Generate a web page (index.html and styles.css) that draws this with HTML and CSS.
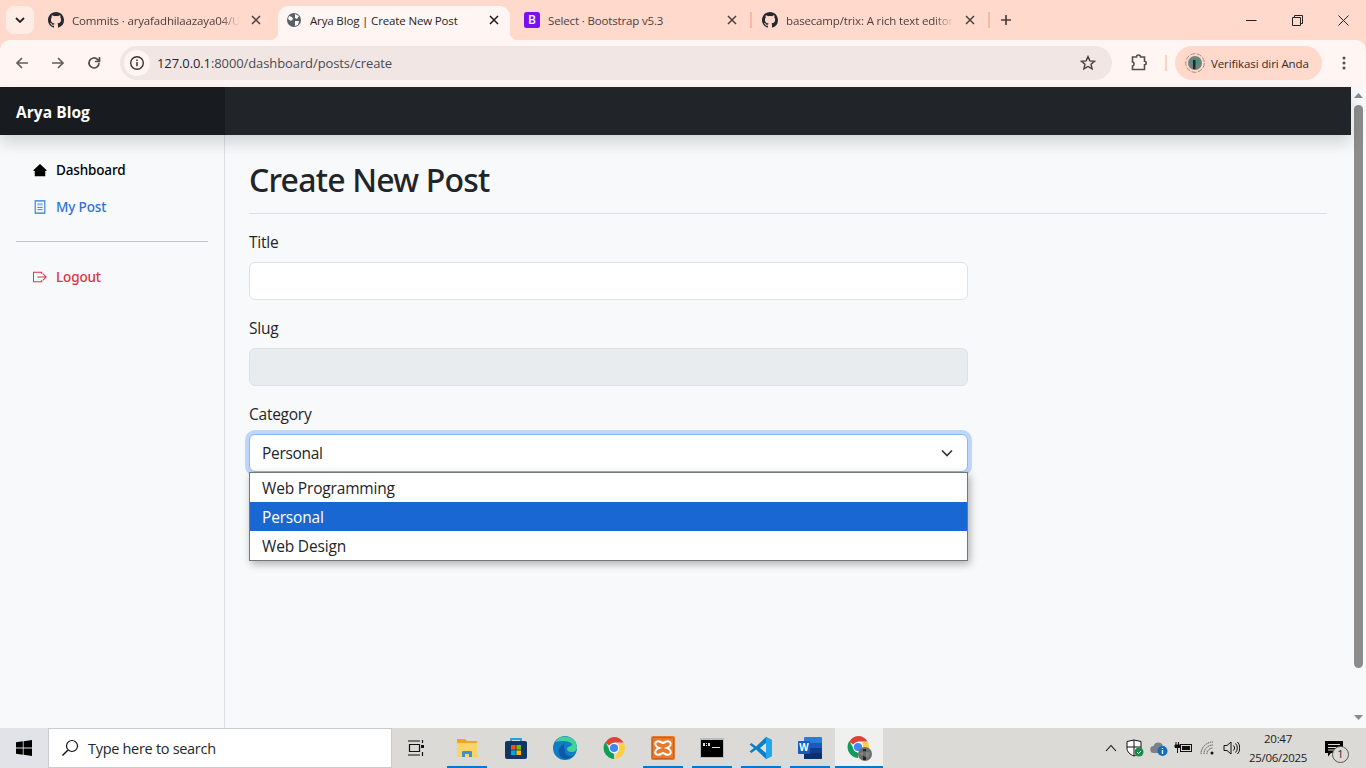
FILE: index.html
```html
<!DOCTYPE html>
<html lang="en">
<head>
<meta charset="utf-8">
<title>Arya Blog | Create New Post</title>
<link rel="stylesheet" href="styles.css">
</head>
<body>
<svg class="defs" width="0" height="0" aria-hidden="true">
  <symbol id="gh" viewBox="0 0 16 16"><path d="M8 0C3.58 0 0 3.58 0 8c0 3.54 2.29 6.53 5.47 7.59.4.07.55-.17.55-.38 0-.19-.01-.82-.01-1.49-2.01.37-2.53-.49-2.69-.94-.09-.23-.48-.94-.82-1.13-.28-.15-.68-.52-.01-.53.63-.01 1.08.58 1.23.82.72 1.21 1.87.87 2.33.69.07-.52.28-.87.51-1.07-1.78-.2-3.64-.89-3.64-3.95 0-.87.31-1.59.82-2.15-.08-.2-.36-1.02.08-2.12 0 0 .67-.21 2.2.82.64-.18 1.32-.27 2-.27.68 0 1.36.09 2 .27 1.53-1.04 2.2-.82 2.2-.82.44 1.1.16 1.92.08 2.12.51.56.82 1.27.82 2.15 0 3.07-1.87 3.75-3.65 3.95.29.25.54.73.54 1.48 0 1.07-.01 1.93-.01 2.2 0 .21.15.46.55.38A8.013 8.013 0 0016 8c0-4.42-3.58-8-8-8z"/></symbol>
  <symbol id="x" viewBox="0 0 10 10"><path d="M1 1l8 8M9 1l-8 8" fill="none" stroke="currentColor" stroke-width="1.5"/></symbol>
  <symbol id="chrome" viewBox="0 0 24 24">
    <path d="M12 12L3.3 6.9A11 11 0 0 1 12 1a11 11 0 0 1 9.6 5.6H12z" fill="#db4437"/>
    <path d="M12 23A11 11 0 0 1 3.3 6.1L8.5 15l3.5 3z" fill="#0f9d58"/>
    <path d="M12 23l5.2-9-1-7h5.6A11 11 0 0 1 12 23z" fill="#ffcd40"/>
    <circle cx="12" cy="12" r="5.2" fill="#fff"/><circle cx="12" cy="12" r="4.1" fill="#4285f4"/>
  </symbol>
</svg>

<header class="chrome">
  <div class="tabstrip">
    <div class="tab-search"><svg width="10" height="6" viewBox="0 0 10 6"><path d="M1 1l4 4 4-4" fill="none" stroke="#2b2320" stroke-width="1.8"/></svg></div>
    <div class="tabs">
      <div class="tab">
        <svg class="fav fav-gh"><use href="#gh"/></svg>
        <span class="tab-title">Commits · aryafadhilaazaya04/U</span>
        <svg class="tab-x"><use href="#x"/></svg>
      </div>
      <div class="tab tab-active">
        <svg class="fav" viewBox="0 0 16 16"><circle cx="8" cy="8" r="7" fill="#5b6067"/><path d="M3 4l3 1 1 2-2 2-3-2zM9 2l4 2-2 3-2-1zM9 9l4 0-1 4-3 1z" fill="#fff"/></svg>
        <span class="tab-title tab-title-full">Arya Blog | Create New Post</span>
        <svg class="tab-x"><use href="#x"/></svg>
      </div>
      <div class="tab">
        <svg class="fav" viewBox="0 0 16 16"><rect width="16" height="16" rx="2.5" fill="#7a10f2"/><text x="8" y="12.4" text-anchor="middle" class="fav-b">B</text></svg>
        <span class="tab-title tab-title-full">Select · Bootstrap v5.3</span>
        <svg class="tab-x"><use href="#x"/></svg>
        <i class="tab-sep"></i>
      </div>
      <div class="tab">
        <svg class="fav fav-gh"><use href="#gh"/></svg>
        <span class="tab-title">basecamp/trix: A rich text editor</span>
        <svg class="tab-x"><use href="#x"/></svg>
        <i class="tab-sep"></i>
      </div>
    </div>
    <svg class="tab-new" width="12" height="12" viewBox="0 0 12 12"><path d="M6 1v10M1 6h10" stroke="#4a3f3b" stroke-width="1.7"/></svg>
    <div class="winctl">
      <svg width="11" height="11" viewBox="0 0 11 11"><path d="M0 5.500h10.500" stroke="#222" stroke-width="1"/></svg>
      <svg width="11" height="11" viewBox="0 0 11 11"><path d="M.5 2.500h8v8h-8zM2.500 2.500v-2h8v8h-2" fill="none" stroke="#222" stroke-width="1"/></svg>
      <svg width="11" height="11" viewBox="0 0 11 11"><path d="M.5.500l10 10M10.500.500l-10 10" stroke="#222" stroke-width="1"/></svg>
    </div>
  </div>
  <div class="toolbar">
    <svg class="tool" viewBox="0 0 16 16"><path d="M14 8H3M8 3L3 8l5 5" fill="none" stroke="#6b5a55" stroke-width="1.7"/></svg>
    <svg class="tool" viewBox="0 0 16 16"><path d="M2 8h11M8 3l5 5-5 5" fill="none" stroke="#6b5a55" stroke-width="1.7"/></svg>
    <svg class="tool" viewBox="0 0 16 16"><path d="M13 8a5 5 0 1 1-1.500-3.600L13.500 6.500M13.500 2v4.500H9" fill="none" stroke="#5c4c47" stroke-width="1.7"/></svg>
    <div class="omnibox">
      <span class="info"><svg width="16" height="16" viewBox="0 0 16 16"><circle cx="8" cy="8" r="6.300" fill="none" stroke="#3b3230" stroke-width="1.400"/><path d="M8 7v4.200M8 4.400v1.500" stroke="#3b3230" stroke-width="1.500"/></svg></span>
      <span class="url">127.0.0.1<span class="url-path">:8000/dashboard/posts/create</span></span>
      <svg class="star" width="16" height="16" viewBox="0 0 16 16"><path d="M8 1.600l1.900 4.300 4.600.4-3.500 3 1.100 4.600L8 11.500l-4.100 2.400L5 9.300l-3.500-3 4.600-.4z" fill="none" stroke="#4a3d39" stroke-width="1.400"/></svg>
    </div>
    <svg class="ext" width="18" height="18" viewBox="0 0 18 18"><path d="M2.500 3h4a2 2 0 0 1 4 0h4v4.300a1.700 1.700 0 0 1 0 3.400v4.800h-12v-3.500a1.800 1.800 0 0 0 1.500-1.800A1.800 1.800 0 0 0 2.500 8z" fill="none" stroke="#5c4c47" stroke-width="1.600"/></svg>
    <i class="tool-sep"></i>
    <div class="profile">
      <svg width="20" height="20" viewBox="0 0 20 20"><circle cx="10" cy="10" r="9.300" fill="none" stroke="#b8877a" stroke-dasharray="5 1.500"/><circle cx="10" cy="10" r="7" fill="#6f8480"/><path d="M3.500 9L12 5.500l4 2.500-2 4z" fill="#4d8f7d"/><path d="M8 7h2.500v9H8z" fill="#22282b"/></svg>
      <span>Verifikasi diri Anda</span>
    </div>
    <svg class="dots" width="4" height="14" viewBox="0 0 4 14"><circle cx="2" cy="2" r="1.500"/><circle cx="2" cy="7" r="1.500"/><circle cx="2" cy="12" r="1.500"/></svg>
  </div>
</header>

<div class="stage">
  <div class="viewport">
    <nav class="navbar"><a class="brand">Arya Blog</a></nav>
    <div class="below">
      <aside class="sidebar">
        <ul class="side-list">
          <li class="side-item side-dark">
            <svg class="side-ico" viewBox="0 0 16 16"><path d="M8 1L16 8.500 14 9v6H2V9L0 8.500z" fill="#000"/></svg>Dashboard
          </li>
          <li class="side-item side-blue">
            <svg class="side-ico" viewBox="0 0 16 16"><path d="M2.500 1h11v14h-11z" fill="none" stroke="currentColor" stroke-width="1.200"/><path d="M5 3.700h6v2.500H5z" fill="#9db9ec"/><path d="M5 8.500h6M5 11h6" stroke="currentColor"/></svg>My Post
          </li>
        </ul>
        <hr class="side-hr">
        <ul class="side-list">
          <li class="side-item side-red">
            <svg class="side-ico" viewBox="0 0 16 16"><path d="M10 4.500V2.500H.500v11H10v-2M5 8h10M11.500 4.500L15 8l-3.500 3.500" fill="none" stroke="currentColor" stroke-width="1.200"/></svg>Logout
          </li>
        </ul>
      </aside>
      <main class="content">
        <h1 class="title">Create New Post</h1>
        <form class="form">
          <div class="field">
            <label class="label">Title</label>
            <div class="input"></div>
          </div>
          <div class="field">
            <label class="label">Slug</label>
            <div class="input input-disabled"></div>
          </div>
          <div class="field select-field">
            <label class="label">Category</label>
            <div class="input select">Personal
              <svg class="caret" width="12" height="8" viewBox="0 0 12 8"><path d="M1 1.500l5 5 5-5" fill="none" stroke="#343a40" stroke-width="1.700"/></svg>
            </div>
            <ul class="dropdown">
              <li class="opt">Web Programming</li>
              <li class="opt opt-on">Personal</li>
              <li class="opt">Web Design</li>
            </ul>
          </div>
        </form>
      </main>
    </div>
  </div>
  <div class="scrollbar">
    <svg class="sb-arrow" width="9" height="5" viewBox="0 0 9 5"><path d="M4.500 0L9 5H0z"/></svg>
    <div class="sb-thumb"></div>
    <svg class="sb-arrow" width="9" height="5" viewBox="0 0 9 5"><path d="M0 0h9L4.500 5z"/></svg>
  </div>
</div>

<footer class="taskbar">
  <div class="start"><svg width="16" height="16" viewBox="0 0 16 16"><path d="M0 2.300l6.800-1v6.300H0zM7.600 1.200L16 0v7.600H7.600zM0 8.400h6.800v6.300l-6.800-1zM7.600 8.400H16V16l-8.400-1.200z" fill="#000"/></svg></div>
  <div class="search">
    <svg width="18" height="18" viewBox="0 0 18 18"><circle cx="11" cy="7" r="5.500" fill="none" stroke="#111" stroke-width="1.200"/><path d="M7 11l-5.500 5.500" stroke="#111" stroke-width="1.400"/></svg>
    <span>Type here to search</span>
  </div>
  <div class="taskview"><svg width="18" height="18" viewBox="0 0 18 18"><path d="M1 2h12M1 16h12M2.500 5.500h10v7h-10zM15.500 1v3M15.500 13v4" fill="none" stroke="#111" stroke-width="1.200"/><rect x="14" y="6" width="3" height="3" fill="#111"/></svg></div>
  <div class="apps">
    <div class="app app-on"><svg width="24" height="24" viewBox="0 0 24 24"><path d="M2 3h8l2 2h10v4H2z" fill="#e9a824"/><path d="M2 7h20v14H2z" fill="#fbd467"/><path d="M7 21v-5a1 1 0 0 1 1-1h8a1 1 0 0 1 1 1v5h-3v-3h-4v3z" fill="#3f8fd2"/></svg></div>
    <div class="app"><svg width="24" height="24" viewBox="0 0 24 24"><path d="M7 6V3h10v3" fill="none" stroke="#20a4d8" stroke-width="1.800"/><rect x="1" y="5" width="22" height="18" rx="2" fill="#12365f"/><rect x="7" y="9" width="4.600" height="4.600" fill="#f25022"/><rect x="12.400" y="9" width="4.600" height="4.600" fill="#7fba00"/><rect x="7" y="14.400" width="4.600" height="4.600" fill="#00a4ef"/><rect x="12.400" y="14.400" width="4.600" height="4.600" fill="#ffb900"/></svg></div>
    <div class="app"><svg width="24" height="24" viewBox="0 0 24 24"><circle cx="12" cy="12" r="12" fill="#0f7dc2"/><path d="M2 6A12 12 0 0 1 24 11c0 3-2 5-5 5s-5-1-5-3c0-3 5-2 5-5-2-3-10-4-17-2z" fill="#41d199"/><path d="M12 14c-1 4 3 7 7 6 1 0 2-1 3-2-3 5-11 7-15 2-3-4-1-11 5-12-2 2-1 3 0 6z" fill="#0c5aa6"/></svg></div>
    <div class="app"><svg width="24" height="24"><use href="#chrome"/></svg></div>
    <div class="app app-on"><svg width="24" height="24" viewBox="0 0 24 24"><rect width="24" height="24" rx="2" fill="#e87a2d"/><rect x="1.500" y="1.500" width="21" height="21" rx="1" fill="none" stroke="#c9601b"/><path d="M5 6c3-2 4 0 7 1 3-1 4-3 7-1 2 2 0 5-3 6 3 1 5 4 3 6-3 2-4 0-7-1-3 1-4 3-7 1-2-2 0-5 3-6-3-1-5-4-3-6z" fill="none" stroke="#fff" stroke-width="2"/></svg></div>
    <div class="app app-on"><svg width="24" height="20" viewBox="0 0 24 20"><rect width="24" height="20" fill="#b9bcbc"/><rect x="1" y="2" width="22" height="17" fill="#000"/><path d="M3 5h2v3H3zM6 5h1v1H6zM6 7h1v1H6zM8 5h2v3H8zM12 9h8v1h-8z" fill="#ddd"/></svg></div>
    <div class="app app-on"><svg width="24" height="24" viewBox="0 0 24 24"><path d="M17 1l6 3v16l-6 3-10-9.500L2.500 17 .5 15.500 5 12 .5 8.500 2.500 7 7 10.500z" fill="#0a7fc7"/><path d="M17 1l6 3v16l-6 3z" fill="#23a6f0"/><path d="M17 7l-6 5 6 5z" fill="#e3e0dc"/></svg></div>
    <div class="app app-on"><svg width="24" height="24" viewBox="0 0 24 24"><rect x="6" y="1" width="18" height="22" rx="1" fill="#2b7cd3"/><path d="M6 7h18v5H6z" fill="#185abd"/><path d="M6 12h18v5H6z" fill="#103f91"/><path d="M6 17h18v5a1 1 0 0 1-1 1H6z" fill="#0c2f70"/><rect y="5" width="12" height="13" rx="1" fill="#185abd"/><text x="6" y="15" text-anchor="middle" class="word-w">W</text></svg></div>
    <div class="app app-on app-active"><svg width="26" height="26" viewBox="0 0 26 26"><use href="#chrome" width="24" height="24"/><circle cx="19" cy="19" r="7" fill="#6b6f6f"/><path d="M17 14h3v11h-3z" fill="#20262a"/><path d="M13 19l5-3 6 2-2 5z" fill="#8a908e" opacity=".7"/></svg></div>
  </div>
  <div class="tray">
    <svg class="tray-chev" width="12" height="8" viewBox="0 0 12 8"><path d="M1 7l5-5.500L11 7" fill="none" stroke="#111" stroke-width="1.100"/></svg>
    <svg class="tray-shield" width="18" height="18" viewBox="0 0 18 18"><path d="M1 2.500L8 1l7 1.500V9c0 4-3 6.500-7 8-4-1.500-7-4-7-8z" fill="#fff" stroke="#111"/><path d="M8 1v16M1 8h14" stroke="#111"/><circle cx="13" cy="13" r="4.500" fill="#1c8a4a"/><path d="M11 13l1.500 1.500L15 12" fill="none" stroke="#fff"/></svg>
    <svg class="tray-cloud" width="18" height="16" viewBox="0 0 18 16"><path d="M4 13a3.500 3.500 0 0 1-.5-7 5 5 0 0 1 9.500 0c1 0 2 .5 3 1.500V13z" fill="#7b8187"/><circle cx="12.500" cy="11" r="5" fill="#0d6cc4"/><path d="M12.500 8v1M12.500 10v4" stroke="#fff" stroke-width="1.300"/></svg>
    <svg class="tray-batt" width="18" height="12" viewBox="0 0 18 12"><rect x="6.500" y="2.500" width="11" height="7" fill="none" stroke="#111"/><rect x="8" y="4" width="8" height="4" fill="#111"/><path d="M2 0v3M4.500 0v3M1 3h5v2.500H1zM3.500 5.500V11" stroke="#111" fill="#111"/></svg>
    <svg class="tray-wifi" width="16" height="14" viewBox="0 0 16 14"><path d="M1 13A12 12 0 0 1 13 1M4 13a9 9 0 0 1 9-9M7 13a6 6 0 0 1 6-6" fill="none" stroke="#4f4f4f" stroke-dasharray="1.500 .7"/><circle cx="12" cy="12" r="1.500" fill="#111"/></svg>
    <svg class="tray-vol" width="17" height="14" viewBox="0 0 17 14"><path d="M1 4.500h3L8 1v12L4 9.500H1z" fill="none" stroke="#111"/><path d="M10.500 4.500a3.500 3.500 0 0 1 0 5M12.500 2.500a6.500 6.500 0 0 1 0 9M14.500 1a9 9 0 0 1 0 12" fill="none" stroke="#111"/></svg>
    <div class="clock"><span>20:47</span><span>25/06/2025</span></div>
    <div class="notif">
      <svg width="18" height="16" viewBox="0 0 18 16"><path d="M0 0h18v12H6l-3 3.500V12H0z" fill="#000"/><path d="M3 3.500h12M3 6.500h12M3 9h8" stroke="#dbd9d6"/></svg>
      <span class="badge">1</span>
    </div>
  </div>
</footer>
</body>
</html>
```
FILE: styles.css
```css
* { box-sizing: border-box; }
html, body { margin: 0; height: 100%; overflow: hidden; }
body {
  width: 1366px;
  height: 768px;
  display: flex;
  flex-direction: column;
  font-family: "Open Sans", "Noto Sans", "Liberation Sans", sans-serif;
  color: #212529;
  background: #f8f9fa;
}
ul { list-style: none; margin: 0; padding: 0; }
.defs { position: absolute; }

/* browser chrome */
.chrome { height: 87px; flex: none; background: #ffd9cc; }
.tabstrip { height: 40px; display: flex; align-items: flex-start; padding: 6px 0 0 6px; position: relative; }
.tab-search { width: 28px; height: 28px; border-radius: 8px; background: #ffece5; display: flex; align-items: center; justify-content: center; flex: none; }
.tabs { display: flex; gap: 6px; margin-left: 6px; }
.tab {
  width: 232px; height: 34px; flex: none; position: relative;
  display: flex; align-items: center; padding: 0 8px 6px; gap: 8px;
  font-size: 11.500px; letter-spacing: -.15px; color: #4c403c; border-radius: 10px 10px 0 0;
}
.tab-active { background: #fff5f2; color: #2b2422; }
.tab-active::before, .tab-active::after {
  content: ""; position: absolute; bottom: 0; width: 8px; height: 8px;
}
.tab-active::before { left: -8px; background: radial-gradient(circle at 0 0, transparent 8px, #fff5f2 8.500px); }
.tab-active::after { right: -8px; background: radial-gradient(circle at 100% 0, transparent 8px, #fff5f2 8.500px); }
.fav { width: 16px; height: 16px; flex: none; }
.fav-gh { fill: #24292f; }
.fav-b { font: 600 12px "Open Sans", sans-serif; fill: #fff; }
.tab-title {
  flex: 1; min-width: 0; overflow: hidden; white-space: nowrap;
  -webkit-mask-image: linear-gradient(to right, #000 88%, transparent 100%);
  mask-image: linear-gradient(to right, #000 88%, transparent 100%);
}
.tab-title-full { -webkit-mask-image: none; mask-image: none; }
.tab-x { width: 10px; height: 10px; flex: none; margin: 0 3px; color: #4c403c; }
.tab-active .tab-x { color: #1f1a18; }
.tab-sep { position: absolute; right: -4px; top: 6px; width: 2px; height: 16px; background: #fbb8a3; }
.tab-new { flex: none; margin: 8px 0 0 14px; }
.winctl { margin-left: auto; display: flex; align-items: center; gap: 35px; padding: 9px 17px 0 0; }
.toolbar {
  height: 47px; background: #fff5f2; border-radius: 10px 10px 0 0;
  display: flex; align-items: center; padding: 0 14px 1px 14px;
}
.tool { width: 16px; height: 16px; margin-right: 20px; flex: none; }
.tool:nth-child(3) { margin-right: 18px; }
.omnibox {
  width: 992px; height: 34px; border-radius: 17px; background: #f2e6e4; flex: none;
  display: flex; align-items: center; padding: 0 16px 0 4px;
}
.info { width: 26px; height: 26px; border-radius: 50%; background: #fff5f2; display: flex; align-items: center; justify-content: center; flex: none; }
.url { font-size: 13px; letter-spacing: -.1px; margin-left: 7px; color: #23262b; }
.url-path { color: #4b4a50; }
.star { margin-left: auto; }
.ext { margin-left: 18px; flex: none; }
.tool-sep { width: 2px; height: 16px; background: #fbd3c6; margin-left: 17px; flex: none; }
.profile {
  width: 147px; height: 34px; border-radius: 17px; background: #ffd9cc; margin-left: 8px; flex: none;
  display: flex; align-items: center; padding-left: 10px; gap: 6px; font-size: 11.500px; letter-spacing: -.1px; color: #38292a; white-space: nowrap;
}
.dots { margin-left: 20px; fill: #5c4c47; flex: none; }

/* page */
.stage { flex: 1; min-height: 0; display: flex; }
.viewport { flex: 1; min-width: 0; display: flex; flex-direction: column; }
.navbar {
  height: 48px; flex: none; background: #212529; position: relative; z-index: 2;
  box-shadow: 0 8px 16px rgba(0,0,0,.15); display: flex;
}
.brand {
  width: 225px; background: #181b1f; color: #fff; font-size: 15.500px; font-weight: 700;
  padding: 1px 0 0 16px; display: flex; align-items: center; letter-spacing: .05px;
}
.below { flex: 1; min-height: 0; display: flex; }
.sidebar { width: 225px; flex: none; border-right: 1px solid #dcdfe4; padding: 16px 16px 0; background: #f8f9fa; }
.side-item { height: 37px; display: flex; align-items: center; font-family: "Noto Sans", "Open Sans", sans-serif; font-size: 13.500px; font-weight: 500; padding-left: 17px; gap: 9px; letter-spacing: -.15px; }
.side-ico { width: 14px; height: 16px; flex: none; }
.side-dark { color: #000; }
.side-blue { color: #2c72dc; }
.side-red { color: #dc3545; }
.side-hr { margin: 16px 0 16px; border: 0; border-top: 1px solid #c4c6ca; }
.content { flex: 1; min-width: 0; padding: 0 24px; }
.title {
  margin: 0 0 15px; height: 79px; padding-top: 21px; border-bottom: 1px solid #dee2e6;
  font-family: "Noto Sans", "Open Sans", sans-serif;
  font-size: 32px; font-weight: 500; line-height: 48px; letter-spacing: -.8px; color: #212529;
}
.form { width: 719px; }
.field { margin-bottom: 15px; position: relative; }
.label { display: block; height: 33px; padding-top: 1px; font-size: 15.500px; line-height: 24px; letter-spacing: -.25px; }
.input {
  height: 38px; background: #fff; border: 1px solid #dee2e6; border-radius: 6px;
  font-size: 15.500px; letter-spacing: -.3px; line-height: 36px; padding: 0 12px;
}
.input-disabled { background: #e9ecef; }
.select { position: relative; border-color: #86b7fe; box-shadow: 0 0 0 4px rgba(13,110,253,.25); }
.caret { position: absolute; right: 14px; top: 14px; }
.dropdown {
  position: absolute; left: 0; top: 71px; width: 719px; height: 89px;
  background: #fff; border: 1px solid #767676; box-shadow: 2px 3px 8px rgba(0,0,0,.3);
  font-size: 15.500px; letter-spacing: -.17px; z-index: 3;
}
.opt { height: 29px; line-height: 28px; padding: 1px 0 0 12px; }
.opt-on { background: #1967d2; color: #fff; }

/* scrollbar */
.scrollbar { width: 15px; flex: none; background: #f8f9fa; display: flex; flex-direction: column; align-items: center; padding: 6px 0 8px; }
.sb-arrow { fill: #8a8a8a; flex: none; }
.sb-thumb { width: 9px; height: 563px; margin: 7px 0 0; background: #8c8c8c; border-radius: 5px; }
.sb-thumb + .sb-arrow { margin-top: auto; }

/* taskbar */
.taskbar { height: 40px; flex: none; display: flex; background: #dcdad7; font-family: "Open Sans", sans-serif; }
.start { width: 48px; background: #e2e2e9; display: flex; align-items: center; justify-content: center; flex: none; }
.search {
  width: 344px; height: 40px; background: #fff; border: 1px solid #c9cbd0; flex: none;
  display: flex; align-items: center; padding-left: 12px; gap: 9px; font-size: 14.500px; letter-spacing: -.3px; color: #24282c;
}
.taskview { width: 50px; display: flex; align-items: center; justify-content: center; padding-right: 3px; flex: none; }
.apps { display: flex; flex: none; }
.app { width: 49px; height: 40px; display: flex; align-items: center; justify-content: center; position: relative; }
.app-on::after { content: ""; position: absolute; left: 5px; right: 4px; bottom: 0; height: 2px; background: #0078d4; }
.app-active { background: #f0f0ef; width: 48px; margin-left: 1px; }
.app-active::after { left: 0; right: 0; }
.word-w { font: 700 10px "Liberation Sans", sans-serif; fill: #fff; }
.tray { margin-left: auto; display: flex; align-items: center; padding-right: 11px; }
.tray-shield { margin-left: 9px; }
.tray-cloud { margin-left: 6px; }
.tray-batt { margin-left: 6px; }
.tray-wifi { margin-left: 8px; }
.tray-vol { margin-left: 6.500px; }
.clock { display: flex; flex-direction: column; align-items: center; font-size: 11.500px; line-height: 19px; letter-spacing: -.3px; width: 64px; margin-left: 6.500px; color: #222; }
.notif { position: relative; width: 30px; height: 40px; margin-left: 15px; padding-top: 12px; }
.badge {
  position: absolute; left: 7px; top: 18px; width: 17px; height: 17px; border-radius: 50%;
  border: 1.500px solid #555; background: #dcdad7; font-size: 11px; line-height: 14px; text-align: center;
}
```
